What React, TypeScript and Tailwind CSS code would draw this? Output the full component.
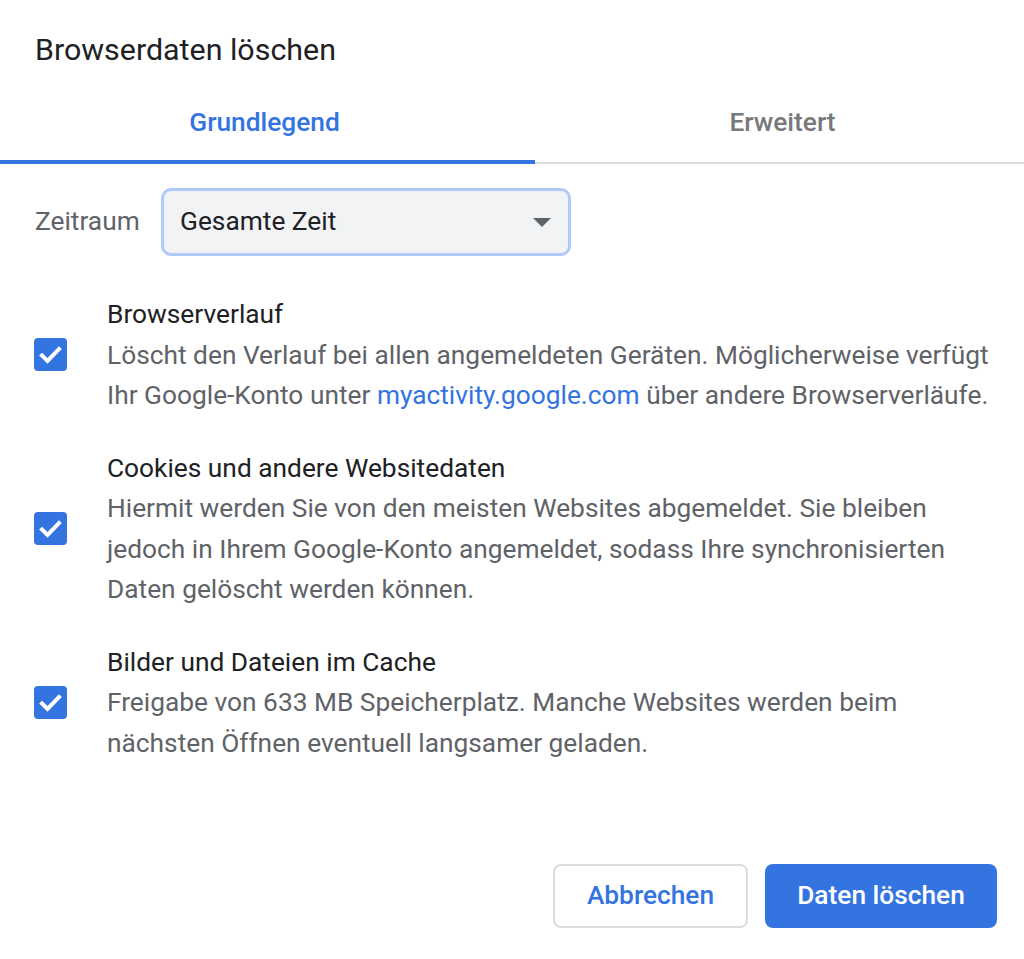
import React, { useState } from 'react';

const Checkbox: React.FC<{ checked: boolean; onToggle: () => void }> = ({ checked, onToggle }) => (
  <button
    onClick={onToggle}
    className={`w-[33px] h-[33px] rounded-[4px] flex items-center justify-center shrink-0 ${checked ? 'bg-[#3474e0]' : 'border-2 border-[#5f6368] bg-white'}`}
  >
    {checked && (
      <svg width="33" height="33" viewBox="0 0 33 33" fill="none">
        <path d="M8 17.5 L13.5 23 L25 11" stroke="white" strokeWidth="4" strokeLinecap="square" />
      </svg>
    )}
  </button>
);

const Option: React.FC<{ title: string; lines: React.ReactNode[] }> = ({ title, lines }) => {
  const [checked, setChecked] = useState(true);
  return (
    <div className="flex items-center">
      <div className="w-[107px] pl-[34px] flex">
        <Checkbox checked={checked} onToggle={() => setChecked(!checked)} />
      </div>
      <div className="leading-[40.5px] text-[26.3px] whitespace-nowrap">
        <div className="text-[#202124]">{title}</div>
        {lines.map((l, i) => (
          <div key={i} className="text-[#5f6368]">{l}</div>
        ))}
      </div>
    </div>
  );
};

export default function App() {
  const [tab, setTab] = useState(0);

  return (
    <div className="w-[1024px] h-[959px] bg-white flex flex-col font-['Roboto',sans-serif]">
      {/* Title */}
      <div className="pt-[30px] px-[35px] text-[30.4px] leading-[40px] text-[#202124]">Browserdaten löschen</div>

      {/* Tabs */}
      <div className="flex border-b-2 border-[#dadce0]">
        {['Grundlegend', 'Erweitert'].map((t, i) => (
          <button
            key={t}
            onClick={() => setTab(i)}
            className={`relative h-[92px] pt-[13px] flex items-center justify-center text-[26.3px] font-medium ${i === 0 ? 'w-[535px] pr-[6px]' : 'flex-1 pl-[6px]'} ${tab === i ? 'text-[#3474e0]' : 'text-[#76797c]'}`}
          >
            {t}
            {tab === i && <span className="absolute left-0 right-0 -bottom-[2px] h-[4px] bg-[#3474e0]" />}
          </button>
        ))}
      </div>

      {/* Zeitraum */}
      <div className="flex items-center mt-[24px] pl-[35px]">
        <span className="w-[126px] text-[26.3px] text-[#5f6368]">Zeitraum</span>
        <div className="w-[410px] h-[68px] rounded-[10px] border-[3px] border-[#aecbfa] bg-[#f1f3f4] flex items-center justify-between pl-[16px] pr-[17px]">
          <span className="text-[26.3px] text-[#202124]">Gesamte Zeit</span>
          <svg width="18" height="9" viewBox="0 0 18 9">
            <path d="M0 0 H18 L9 9 Z" fill="#5f6368" />
          </svg>
        </div>
      </div>

      {/* Options */}
      <div className="flex flex-col gap-[32px] mt-[38px]">
        <Option
          title="Browserverlauf"
          lines={[
            'Löscht den Verlauf bei allen angemeldeten Geräten. Möglicherweise verfügt',
            <>
              Ihr Google-Konto unter <span className="text-[#3474e0]">myactivity.google.com</span> über andere Browserverläufe.
            </>,
          ]}
        />
        <Option
          title="Cookies und andere Websitedaten"
          lines={[
            'Hiermit werden Sie von den meisten Websites abgemeldet. Sie bleiben',
            'jedoch in Ihrem Google-Konto angemeldet, sodass Ihre synchronisierten',
            'Daten gelöscht werden können.',
          ]}
        />
        <Option
          title="Bilder und Dateien im Cache"
          lines={[
            'Freigabe von 633 MB Speicherplatz. Manche Websites werden beim',
            'nächsten Öffnen eventuell langsamer geladen.',
          ]}
        />
      </div>

      {/* Buttons */}
      <div className="mt-auto flex justify-end gap-[17px] pr-[27px] pb-[31px]">
        <button className="w-[195px] h-[64px] rounded-[8px] border-2 border-[#dadce0] bg-white text-[26.3px] font-medium text-[#3474e0]">
          Abbrechen
        </button>
        <button className="w-[232px] h-[64px] rounded-[8px] bg-[#3474e0] text-[26.3px] font-medium text-white">
          Daten löschen
        </button>
      </div>
    </div>
  );
}
